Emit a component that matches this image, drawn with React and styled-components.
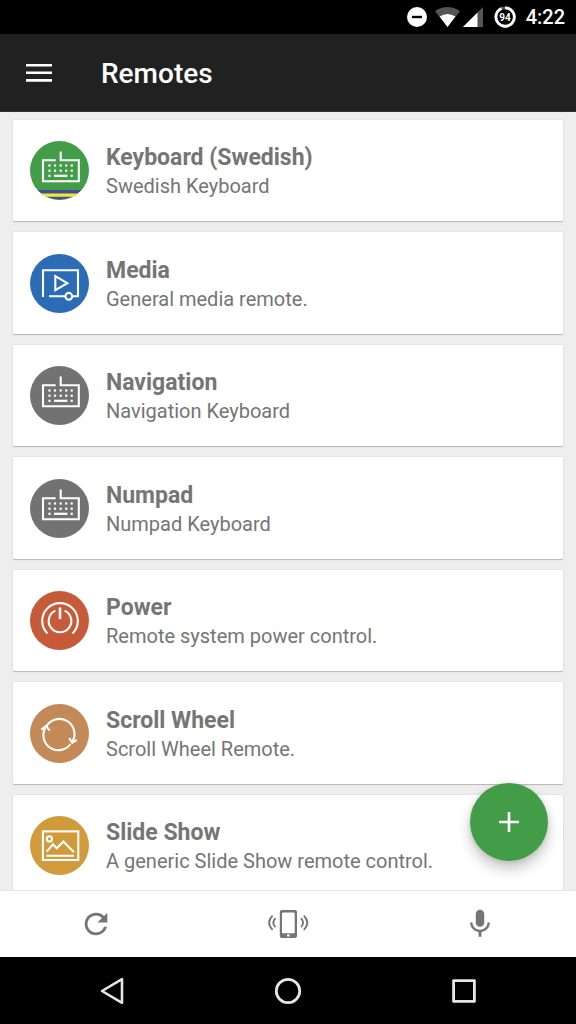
import React from "react";
import styled, { createGlobalStyle } from "styled-components";

const GlobalStyle = createGlobalStyle`
  *, *::before, *::after { box-sizing: border-box; }
  body { margin: 0; background: #000; font-family: Roboto, "Liberation Sans", sans-serif; }
  button { border: 0; padding: 0; margin: 0; background: none; font: inherit; color: inherit; cursor: pointer; }
  svg { display: block; flex: none; }
`;

const Screen = styled.div`
  display: flex;
  flex-direction: column;
  height: 100vh;
  background: #eeeeee;
`;

const StatusBar = styled.div`
  flex: none;
  display: flex;
  align-items: center;
  justify-content: flex-end;
  height: 34px;
  padding-right: 11px;
  background: #000;
  color: #fff;
`;

const StatusIcon = styled.svg`
  margin-right: ${(p) => p.$gap}px;
`;

const Clock = styled.time`
  font-size: 20px;
  line-height: 24px;
  font-weight: 500;
`;

const AppBar = styled.header`
  flex: none;
  display: flex;
  align-items: center;
  gap: 47px;
  height: 78px;
  padding: 0 24px;
  background: #212121;
  color: #fff;
  border-bottom: 1px solid #333;
`;

const AppTitle = styled.h1`
  margin: 0;
  padding-top: 2px;
  font-size: 28px;
  line-height: 36px;
  font-weight: 500;
`;

const Content = styled.main`
  position: relative;
  flex: 1;
  min-height: 0;
`;

const RemoteList = styled.ul`
  display: grid;
  grid-auto-rows: 101px 102px;
  gap: 11px;
  height: 100%;
  margin: 0;
  padding: 8px 13px;
  list-style: none;
  overflow-y: auto;
  scrollbar-width: none;
`;

const RemoteItem = styled.li`
  display: flex;
`;

const RemoteCard = styled.button`
  flex: 1;
  display: flex;
  align-items: center;
  gap: 17px;
  padding: 0 17px;
  background: #fff;
  border-radius: 1px;
  box-shadow: 0 1px 1px rgba(0, 0, 0, 0.2), 0 0 2px rgba(0, 0, 0, 0.14);
  text-align: left;
  color: #757575;
`;

const RemoteText = styled.span`
  display: flex;
  flex-direction: column;
  min-width: 0;
  padding-top: 2px;
`;

const RemoteName = styled.span`
  font-size: 23px;
  line-height: 29px;
  font-weight: 700;
`;

const RemoteNote = styled.span`
  font-size: 20px;
  line-height: 28px;
`;

const AddButton = styled.button`
  position: absolute;
  right: 28px;
  bottom: 29px;
  display: grid;
  place-items: center;
  width: 78px;
  height: 78px;
  border-radius: 50%;
  background: #439d48;
  color: #fff;
  box-shadow: 0 8px 14px rgba(0, 0, 0, 0.22), 0 1px 5px rgba(0, 0, 0, 0.12);
`;

const ActionBar = styled.footer`
  flex: none;
  display: flex;
  height: 67px;
  background: #fff;
  border-top: 1px solid #e4e4e4;
  color: #757575;
`;

const SystemBar = styled.nav`
  flex: none;
  display: flex;
  height: 67px;
  padding: 0 24px;
  background: #000;
  color: #e6e6e6;
`;

const BarButton = styled.button`
  flex: 1;
  display: grid;
  place-items: center;
`;

const Keys = () => (
  <>
    <path d="M25.7 19.3H13V40.2H48.8V19.3H30.7V10.5" />
    <g fill="#fff" stroke="none">
      {[19.5, 25, 30.7, 36.2, 41.7].map((x, col) =>
        [24.5, 29.7, 34.8].map((y, row) =>
          row === 2 && col > 0 && col < 4 ? null : (
            <rect key={`${x}-${y}`} x={x - 1.1} y={y - 1.1} width="2.2" height="2.2" />
          )
        )
      )}
      <rect x="24" y="33.7" width="13.4" height="2.2" />
    </g>
  </>
);

const glyphs = {
  swedish: (
    <>
      <g stroke="none">
        <path fill="#464b9c" d="M7.8 49H51.2A29.5 29.5 0 0 1 7.8 49Z" />
        <path fill="#f4e829" d="M11 52.4H48A29.5 29.5 0 0 1 43 55.7H16A29.5 29.5 0 0 1 11 52.4Z" />
      </g>
      <Keys />
    </>
  ),
  keyboard: <Keys />,
  media: (
    <>
      <path d="M13 43V16.2H48V42.3H42.2M35.4 42.3H19" />
      <circle cx="38.8" cy="42.3" r="3.4" />
      <path d="M25.3 22.2V36.2L37.3 29.2Z" />
    </>
  ),
  power: (
    <>
      <path d="M17.5 42.6A17.8 17.8 0 1 1 42.5 42.6" />
      <path d="M25.4 19.6A11.3 11.3 0 1 0 34.6 19.6" />
      <path d="M30 16.5V28.2" strokeWidth="2.6" />
    </>
  ),
  scroll: (
    <>
      <path d="M16.2 22.5A15 15 0 0 1 42.5 37.5" />
      <path d="M40.5 40A15 15 0 0 1 15.2 24" />
      <path d="M11.3 25.6L16.2 22L19.6 26.6M39.2 34.2L42.3 38.8L46.8 35.8" />
    </>
  ),
  slides: (
    <>
      <rect x="12.9" y="15.4" width="35.4" height="28.6" />
      <circle cx="19.4" cy="22.9" r="2.6" />
      <path d="M16.7 35.6L23 28.4L26.8 32.2L33.4 25.4L44 36.2M16.4 39.7H44" />
    </>
  ),
};

function RemoteIcon({ glyph, color }) {
  return (
    <svg width="59" height="59" viewBox="0 0 59 59" fill="none" stroke="#fff" strokeWidth="2.1" aria-hidden="true">
      <circle cx="29.5" cy="29.5" r="29.5" fill={color} stroke="none" />
      {glyphs[glyph]}
    </svg>
  );
}

const remotes = [
  { name: "Keyboard (Swedish)", note: "Swedish Keyboard", glyph: "swedish", color: "#439d48" },
  { name: "Media", note: "General media remote.", glyph: "media", color: "#2b6cb5" },
  { name: "Navigation", note: "Navigation Keyboard", glyph: "keyboard", color: "#727272" },
  { name: "Numpad", note: "Numpad Keyboard", glyph: "keyboard", color: "#727272" },
  { name: "Power", note: "Remote system power control.", glyph: "power", color: "#c75a39" },
  { name: "Scroll Wheel", note: "Scroll Wheel Remote.", glyph: "scroll", color: "#c38a57" },
  { name: "Slide Show", note: "A generic Slide Show remote control.", glyph: "slides", color: "#d19a3b" },
];

export default function App() {
  return (
    <Screen>
      <GlobalStyle />
      <StatusBar>
        <StatusIcon $gap={8} width="20" height="20" viewBox="0 0 20 20" aria-label="Do not disturb">
          <circle cx="10" cy="10" r="10" fill="#fff" />
          <rect x="5" y="8.8" width="10" height="2.4" fill="#000" />
        </StatusIcon>
        <StatusIcon $gap={3} width="25" height="20" viewBox="0 0 25 20" aria-label="Wi-Fi">
          <path d="M0 4.2Q12.5 -4.2 25 4.2L12.5 20Z" fill="#555" />
          <path d="M4.6 9.6Q12.5 4.4 20.4 9.6L12.5 20Z" fill="#fff" />
        </StatusIcon>
        <StatusIcon $gap={11} width="20" height="20" viewBox="0 0 20 20" aria-label="Mobile signal">
          <path d="M20 0V20H0Z" fill="#555" />
          <path d="M14.5 5.5V20H0Z" fill="#fff" />
        </StatusIcon>
        <StatusIcon $gap={10} width="22" height="22" viewBox="0 0 22 22" aria-label="Battery 94 percent">
          <circle cx="11" cy="11" r="9.2" fill="none" stroke="#555" strokeWidth="2.8" />
          <path d="M11 1.8A9.2 9.2 0 1 1 7.6 2.5" fill="none" stroke="#fff" strokeWidth="2.8" />
          <text x="11" y="14.6" textAnchor="middle" fontSize="10" fontWeight="700" fill="#fff">94</text>
        </StatusIcon>
        <Clock>4:22</Clock>
      </StatusBar>

      <AppBar>
        <button aria-label="Open menu">
          <svg width="30" height="30" viewBox="0 0 30 30" stroke="#fff" strokeWidth="2.6">
            <path d="M2 7.2H28M2 14.8H28M2 22.4H28" />
          </svg>
        </button>
        <AppTitle>Remotes</AppTitle>
      </AppBar>

      <Content>
        <RemoteList>
          {remotes.map((r) => (
            <RemoteItem key={r.name}>
              <RemoteCard>
                <RemoteIcon glyph={r.glyph} color={r.color} />
                <RemoteText>
                  <RemoteName>{r.name}</RemoteName>
                  <RemoteNote>{r.note}</RemoteNote>
                </RemoteText>
              </RemoteCard>
            </RemoteItem>
          ))}
        </RemoteList>
        <AddButton aria-label="Add remote">
          <svg width="20" height="20" viewBox="0 0 20 20" stroke="#fff" strokeWidth="2.6">
            <path d="M10 0V20M0 10H20" />
          </svg>
        </AddButton>
      </Content>

      <ActionBar>
        <BarButton aria-label="Refresh">
          <svg width="34" height="34" viewBox="0 0 24 24" fill="currentColor">
            <path d="M17.65 6.35A7.958 7.958 0 0 0 12 4c-4.42 0-7.99 3.58-7.99 8s3.57 8 7.99 8c3.73 0 6.84-2.55 7.73-6h-2.08A5.99 5.99 0 0 1 12 18c-3.31 0-6-2.69-6-6s2.69-6 6-6c1.66 0 3.14.69 4.22 1.78L13 11h7V4l-2.35 2.35z" />
          </svg>
        </BarButton>
        <BarButton aria-label="Phone sensors">
          <svg width="42" height="30" viewBox="0 0 42 30" fill="none" stroke="currentColor" strokeWidth="1.8">
            <path
              fill="currentColor"
              fillRule="evenodd"
              stroke="none"
              d="M14.7 1H28.1A1.9 1.9 0 0 1 30 2.9V27.1A1.9 1.9 0 0 1 28.1 29H14.7A1.9 1.9 0 0 1 12.8 27.1V2.9A1.9 1.9 0 0 1 14.7 1ZM15 4.6V23.4Q15 24.2 15.8 24.2H26.9Q27.7 24.2 27.7 23.4V4.6Q27.7 3.5 26.7 3.5H16Q15 3.5 15 4.6ZM20.1 25.4V27.6H22.7V25.4Z"
            />
            <path d="M5.6 6.6Q-1.4 13.7 5.6 20.8M8.4 9.2Q4.2 13.7 8.4 18.2M36.8 6.6Q43.8 13.7 36.8 20.8M34 9.2Q38.2 13.7 34 18.2" />
          </svg>
        </BarButton>
        <BarButton aria-label="Voice">
          <svg width="34" height="34" viewBox="0 0 24 24" fill="currentColor">
            <path d="M12 14c1.66 0 2.99-1.34 2.99-3L15 5c0-1.66-1.34-3-3-3S9 3.34 9 5v6c0 1.66 1.34 3 3 3zm5.3-3c0 3-2.54 5.1-5.3 5.1S6.7 14 6.7 11H5c0 3.41 2.72 6.23 6 6.72V21h2v-3.28c3.28-.48 6-3.3 6-6.72h-1.7z" />
          </svg>
        </BarButton>
      </ActionBar>

      <SystemBar aria-label="System">
        <BarButton aria-label="Back">
          <svg width="28" height="28" viewBox="0 0 28 28" fill="none" stroke="currentColor" strokeWidth="2.6" strokeLinejoin="round">
            <path d="M24 2.2V25.8L4 14Z" />
          </svg>
        </BarButton>
        <BarButton aria-label="Home">
          <svg width="28" height="28" viewBox="0 0 28 28" fill="none" stroke="currentColor" strokeWidth="2.8">
            <circle cx="14" cy="14" r="11.7" />
          </svg>
        </BarButton>
        <BarButton aria-label="Recent apps">
          <svg width="28" height="28" viewBox="0 0 28 28" fill="none" stroke="currentColor" strokeWidth="2.8" strokeLinejoin="round">
            <rect x="3.6" y="3.6" width="20.8" height="20.8" />
          </svg>
        </BarButton>
      </SystemBar>
    </Screen>
  );
}
